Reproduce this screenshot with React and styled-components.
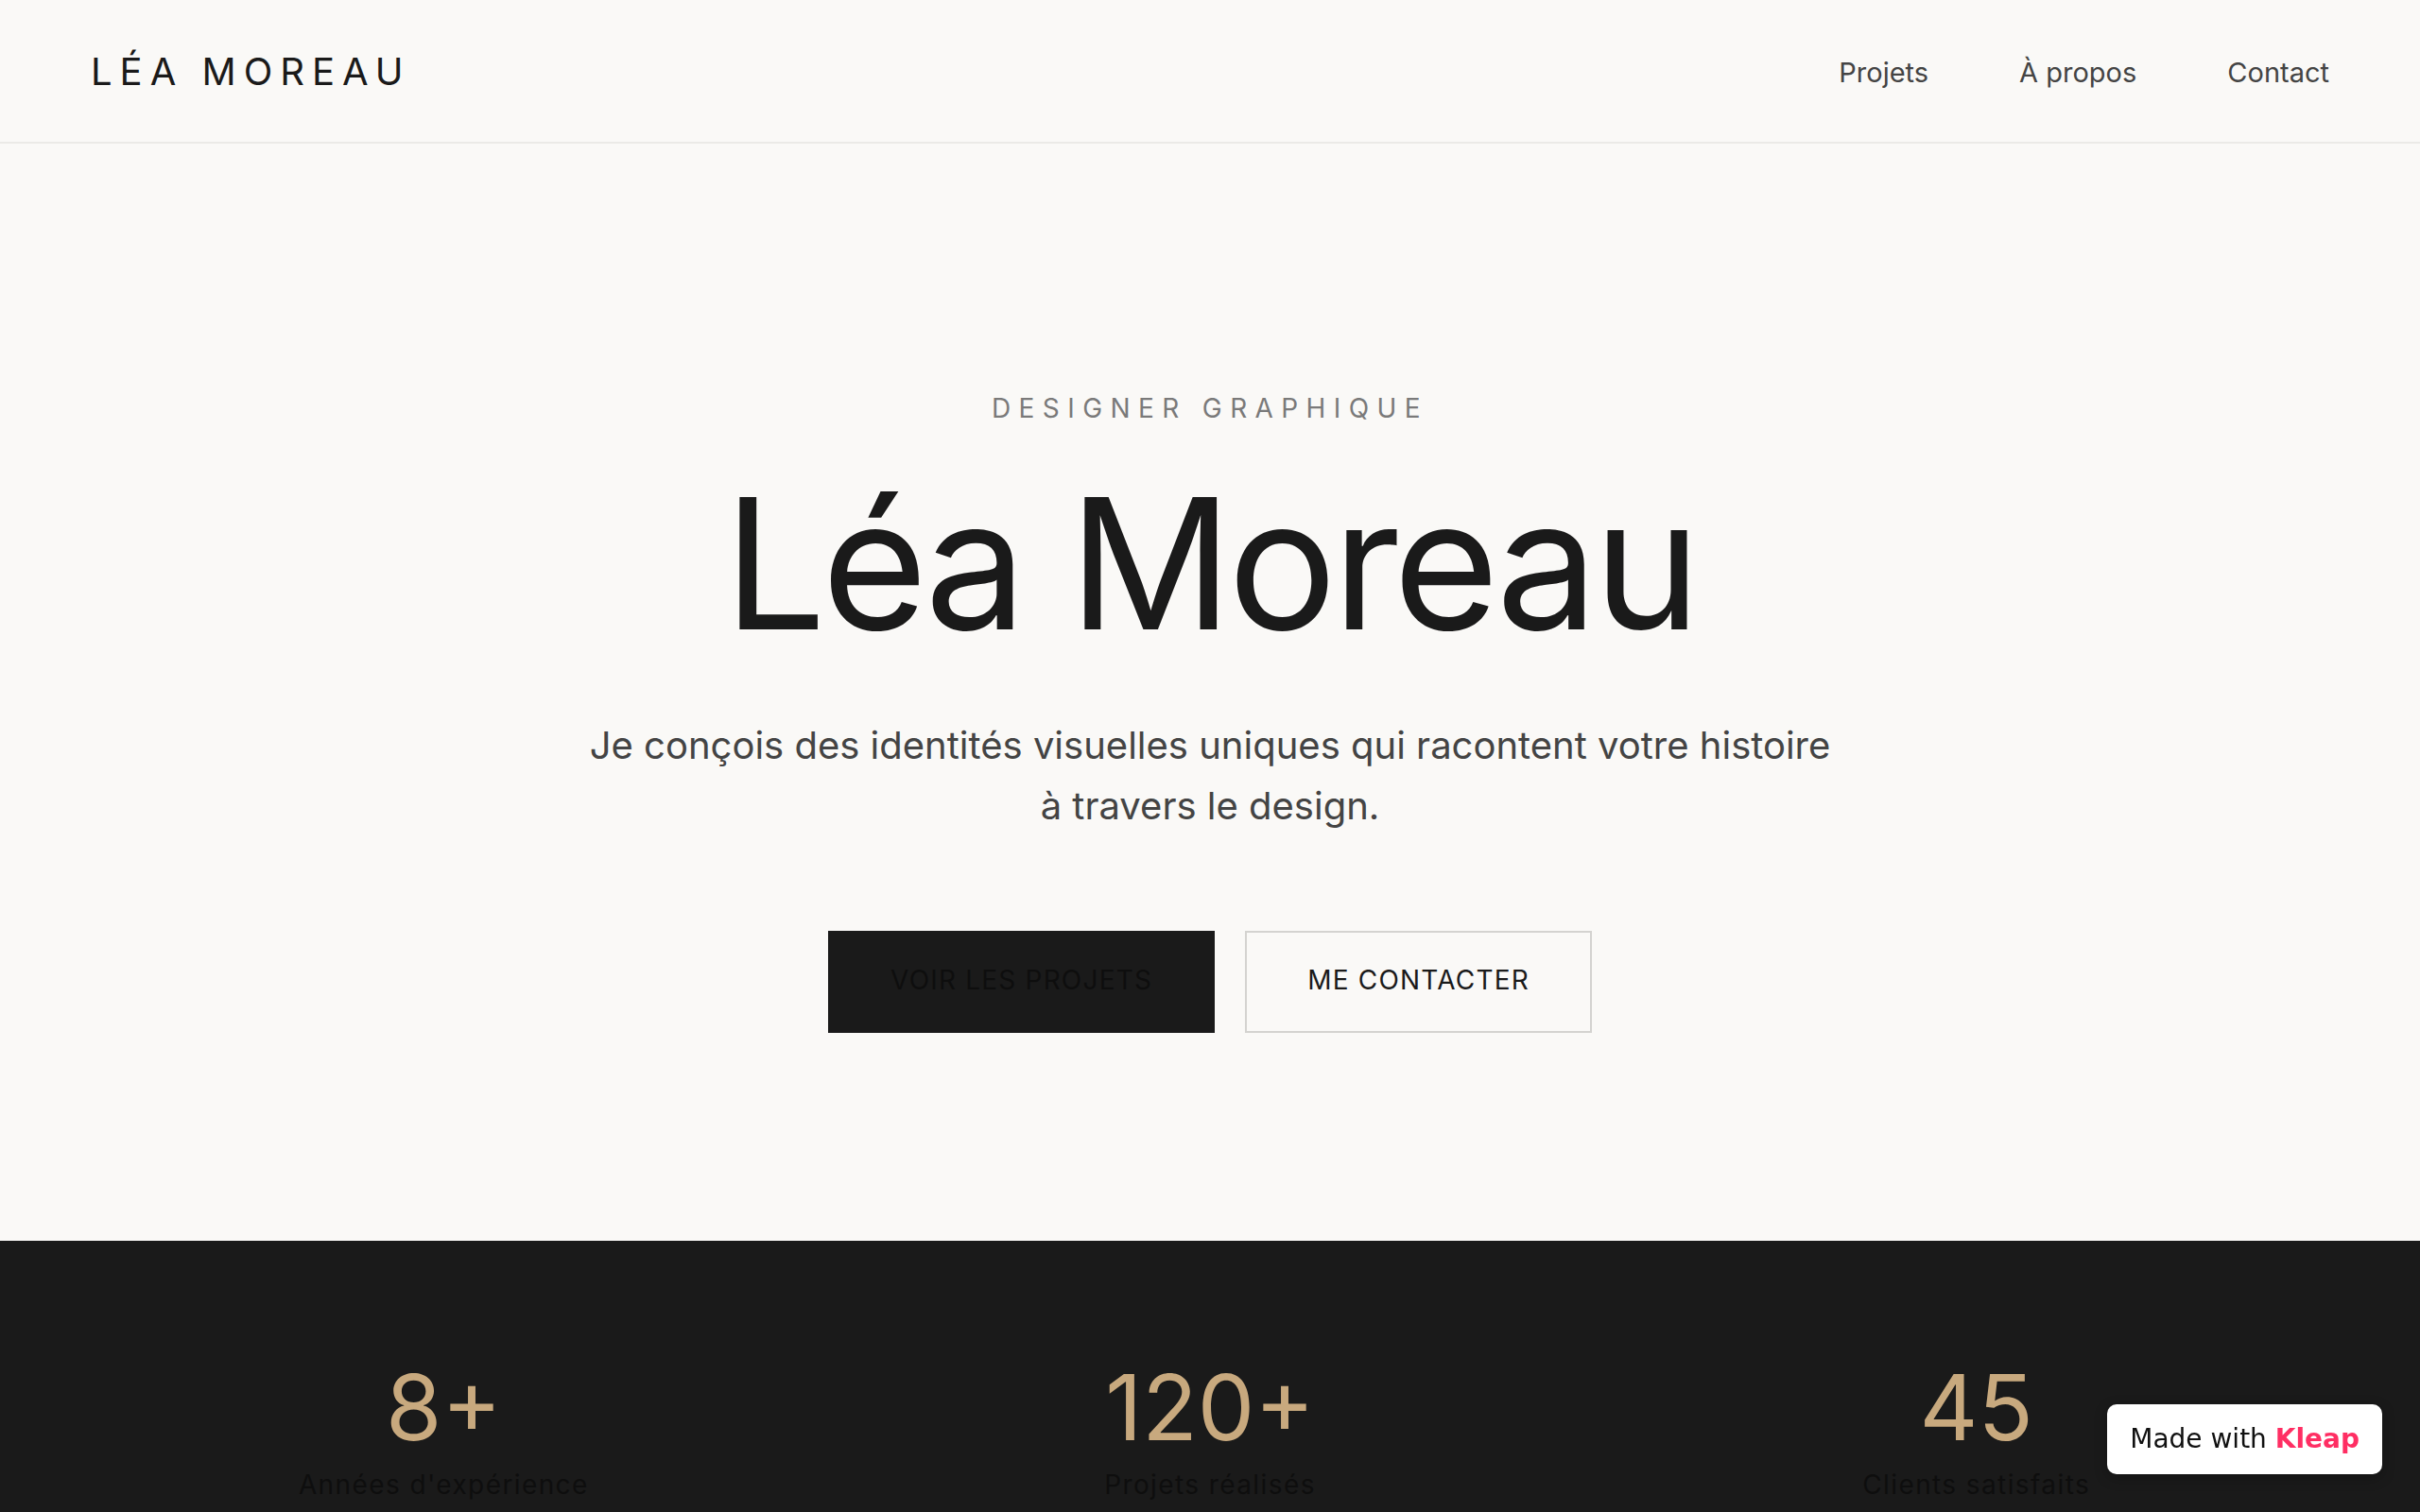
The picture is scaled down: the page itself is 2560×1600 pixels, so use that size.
import React from 'react';
import styled, { createGlobalStyle } from 'styled-components';

const GlobalStyle = createGlobalStyle`
  * {
    box-sizing: border-box;
  }
  html, body {
    margin: 0;
    padding: 0;
    background: #faf9f7;
  }
  body {
    font-family: Inter, 'Noto Sans', sans-serif;
    color: #1a1a1a;
    -webkit-font-smoothing: antialiased;
  }
`;

const Page = styled.div`
  min-height: 100vh;
  background: #faf9f7;
`;

const Header = styled.header`
  display: flex;
  align-items: center;
  justify-content: space-between;
  height: 152px;
  padding: 0 96px;
  border-bottom: 2px solid #ebeae7;
`;

const Logo = styled.a`
  font-size: 40px;
  line-height: 56px;
  font-weight: 400;
  letter-spacing: 0.2em;
  color: #1a1a1a;
  text-decoration: none;
  padding-top: 2px;
`;

const Nav = styled.nav`
  display: flex;
  align-items: center;
  gap: 96px;
  padding-top: 4px;
`;

const NavLink = styled.a`
  font-size: 29px;
  line-height: 42px;
  color: #444;
  text-decoration: none;
`;

const Hero = styled.section`
  display: flex;
  flex-direction: column;
  align-items: center;
  text-align: center;
  padding: 259px 96px 220px;
`;

const Eyebrow = styled.p`
  margin: 0 0 38px;
  font-size: 28px;
  line-height: 42px;
  letter-spacing: 0.3em;
  text-transform: uppercase;
  color: #7a7a7a;
`;

const Title = styled.h1`
  margin: 0 0 55px;
  font-size: 192px;
  line-height: 211px;
  font-weight: 400;
  letter-spacing: -0.025em;
  color: #1a1a1a;
`;

const Lead = styled.p`
  margin: 0 0 100px;
  max-width: 1360px;
  font-size: 40px;
  line-height: 64px;
  font-weight: 400;
  color: #444;
`;

const Actions = styled.div`
  display: flex;
  gap: 32px;
`;

const Button = styled.a`
  display: inline-flex;
  align-items: center;
  justify-content: center;
  height: 108px;
  padding: 0 64px 5px;
  font-size: 28px;
  letter-spacing: 1.2px;
  text-transform: uppercase;
  text-decoration: none;
  border: 2px solid ${p => (p.$primary ? '#1a1a1a' : '#d4d3d0')};
  background: ${p => (p.$primary ? '#1a1a1a' : 'transparent')};
  color: ${p => (p.$primary ? '#0e0e0e' : '#1a1a1a')};
`;

const Stats = styled.section`
  display: grid;
  grid-template-columns: repeat(3, 1fr);
  gap: 64px;
  padding: 128px 96px;
  background: #1a1a1a;
`;

const Stat = styled.div`
  display: flex;
  flex-direction: column;
  align-items: center;
  text-align: center;
`;

const StatValue = styled.span`
  font-size: 96px;
  line-height: 96px;
  font-weight: 400;
  color: #c8a97e;
  margin-bottom: 13px;
`;

const StatLabel = styled.span`
  font-size: 28px;
  line-height: 42px;
  letter-spacing: 0.05em;
  color: #0e0e0e;
`;

const Badge = styled.a`
  position: fixed;
  right: 40px;
  bottom: 40px;
  padding: 20px 24px;
  background: #fff;
  border-radius: 10px;
  box-shadow: 0 4px 14px rgba(0, 0, 0, 0.25);
  font-family: 'DejaVu Sans', sans-serif;
  font-size: 28px;
  line-height: 34px;
  color: #111;
  text-decoration: none;
  white-space: nowrap;
`;

const BadgeBrand = styled.strong`
  font-weight: 700;
  color: #ff2e63;
`;

const stats = [
  { value: '8+', label: "Années d'expérience" },
  { value: '120+', label: 'Projets réalisés' },
  { value: '45', label: 'Clients satisfaits' },
];

export default function App() {
  return (
    <Page>
      <GlobalStyle />
      <Header>
        <Logo href="#">LÉA MOREAU</Logo>
        <Nav>
          <NavLink href="#projets">Projets</NavLink>
          <NavLink href="#apropos">À propos</NavLink>
          <NavLink href="#contact">Contact</NavLink>
        </Nav>
      </Header>

      <Hero>
        <Eyebrow>Designer graphique</Eyebrow>
        <Title>Léa Moreau</Title>
        <Lead>
          Je conçois des identités visuelles uniques qui racontent votre histoire
          <br />à travers le design.
        </Lead>
        <Actions>
          <Button $primary href="#projets">Voir les projets</Button>
          <Button href="#contact">Me contacter</Button>
        </Actions>
      </Hero>

      <Stats>
        {stats.map(s => (
          <Stat key={s.label}>
            <StatValue>{s.value}</StatValue>
            <StatLabel>{s.label}</StatLabel>
          </Stat>
        ))}
      </Stats>

      <Badge href="#">
        Made with <BadgeBrand>Kleap</BadgeBrand>
      </Badge>
    </Page>
  );
}
